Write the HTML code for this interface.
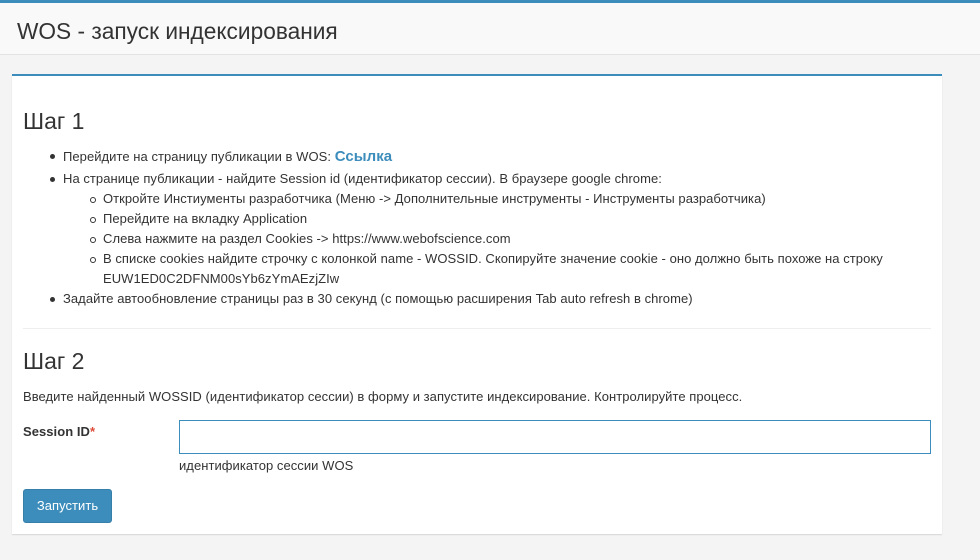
<!DOCTYPE html>
<html><head><meta charset="utf-8"><style>
*{box-sizing:border-box;margin:0;padding:0}
body{width:980px;height:560px;background:#f4f4f4;font-family:"Liberation Sans",sans-serif;color:#333;font-size:13px;position:relative;overflow:hidden}
.top{position:absolute;left:0;top:0;width:980px;height:3px;background:#3c8dbc}
.hdr{position:absolute;left:0;top:3px;width:980px;height:52px;background:#f9f9f9;border-bottom:1px solid #e3e3e3}
.hdr h1{position:absolute;left:17px;top:15px;font-size:22.7px;font-weight:normal;color:#333}
.card{position:absolute;left:12px;top:74px;width:930px;height:460px;background:#fff;border-top:2px solid #3c8dbc;box-shadow:0 1px 1px rgba(0,0,0,.12)}
.abs{position:absolute;white-space:nowrap;letter-spacing:0.05px}
h2{position:absolute;font-size:23px;font-weight:normal;color:#333}
.li{position:absolute;white-space:nowrap;letter-spacing:0.05px}
.li:before{content:"";position:absolute;left:-13px;top:6px;width:5px;height:5px;border-radius:50%;background:#333}
.li.c:before{background:none;border:1px solid #333;width:4px;height:4px}
a{color:#3c8dbc;font-weight:bold;font-size:15px;text-decoration:none}
</style></head><body>
<div class="top"></div>
<div class="hdr"><h1>WOS - запуск индексирования</h1></div>
<div class="card">
<h2 style="left:11px;top:32px">Шаг 1</h2>
<div class="li" style="left:51px;top:72px">Перейдите на страницу публикации в WOS: <a>Ссылка</a></div>
<div class="li" style="left:51px;top:95px">На странице публикации - найдите Session id (идентификатор сессии). В браузере google chrome:</div>
<div class="li c" style="left:91px;top:115px">Откройте Инстиументы разработчика (Меню -&gt; Дополнительные инструменты - Инструменты разработчика)</div>
<div class="li c" style="left:91px;top:135px">Перейдите на вкладку Application</div>
<div class="li c" style="left:91px;top:155px">Слева нажмите на раздел Cookies -&gt; https://www.webofscience.com</div>
<div class="li c" style="left:91px;top:175px">В списке cookies найдите строчку с колонкой name - WOSSID. Скопируйте значение cookie - оно должно быть похоже на строку</div>
<div class="abs" style="left:91px;top:195px">EUW1ED0C2DFNM00sYb6zYmAEzjZIw</div>
<div class="li" style="left:51px;top:215px">Задайте автообновление страницы раз в 30 секунд (с помощью расширения Tab auto refresh в chrome)</div>
<div class="abs" style="left:11px;top:252px;width:908px;height:1px;background:#eee"></div>
<h2 style="left:11px;top:272px">Шаг 2</h2>
<div class="abs" style="left:11px;top:313px">Введите найденный WOSSID (идентификатор сессии) в форму и запустите индексирование. Контролируйте процесс.</div>
<div class="abs" style="left:11px;top:348px;font-weight:bold">Session ID<span style="color:#dd4b39">*</span></div>
<div class="abs" style="left:167px;top:344px;width:752px;height:34px;border:1px solid #3c8dbc"></div>
<div class="abs" style="left:167px;top:382px">идентификатор сессии WOS</div>
<div class="abs" style="left:11px;top:413px;width:89px;height:34px;background:#3c8dbc;border:1px solid #367fa9;border-radius:3px;color:#fff;text-align:center;line-height:32px">Запустить</div>
</div>
</body></html>
